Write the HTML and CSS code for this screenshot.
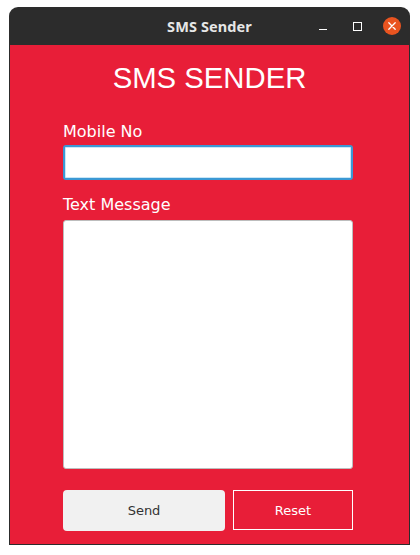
FILE: index.html
```html
<!DOCTYPE html>
<html>
<head>
<meta charset="utf-8">
<link rel="stylesheet" href="styles.css">
</head>
<body>
<div class="window">
  <div class="titlebar">
    <div></div>
    <div class="title">SMS Sender</div>
    <div class="controls">
      <svg class="ctl-min" width="8" height="8" viewBox="0 0 8 8"><line x1="0" y1="6.5" x2="8" y2="6.5" stroke="#ffffff" stroke-width="1"/></svg>
      <svg class="ctl-max" width="9" height="9" viewBox="0 0 9 9"><rect x="0.5" y="0.5" width="8" height="8" fill="none" stroke="#ffffff" stroke-width="1"/></svg>
      <svg class="ctl-close" width="18" height="18" viewBox="0 0 18 18"><circle cx="9" cy="9" r="9" fill="#e95420"/><path d="M5.8 5.8 L12.2 12.2 M12.2 5.8 L5.8 12.2" stroke="#ffffff" stroke-width="1.3" stroke-linecap="round"/></svg>
    </div>
  </div>
  <div class="content">
    <h1 class="heading">SMS SENDER</h1>
    <div class="form">
      <label class="label label-first">Mobile No</label>
      <div class="input"></div>
      <label class="label label-second">Text Message</label>
      <div class="textarea"></div>
      <div class="buttons">
        <button class="btn btn-send">Send</button>
        <button class="btn btn-reset">Reset</button>
      </div>
    </div>
  </div>
</div>
</body>
</html>
```
FILE: styles.css
```css
html, body {
  margin: 0;
  padding: 0;
  background: #ffffff;
}
body {
  padding: 7px 0 0 9px;
}
.window {
  width: 401px;
  box-sizing: border-box;
}
.titlebar {
  height: 38px;
  background: #2c2c2c;
  border-radius: 9px 9px 0 0;
  display: grid;
  grid-template-columns: 1fr auto 1fr;
  align-items: center;
}
.title {
  font-family: "Noto Sans", "DejaVu Sans", sans-serif;
  font-weight: 700;
  font-size: 14.5px;
  color: #e6e6e6;
  letter-spacing: 0.1px;
}
.controls {
  display: flex;
  justify-content: flex-end;
  align-items: center;
  padding-right: 9px;
}
.ctl-min {
  display: block;
  margin-right: 26px;
  margin-top: 1px;
}
.ctl-max {
  display: block;
  margin-right: 21px;
}
.ctl-close {
  display: block;
}
.content {
  background: #e81e38;
  border: 1px solid #2c2c2c;
  border-top: none;
  height: 500px;
  box-sizing: border-box;
  padding: 15px 0 0 53px;
}
.heading {
  margin: 0;
  width: 293px;
  text-align: center;
  font-family: "Liberation Sans", Arial, sans-serif;
  font-weight: 400;
  font-size: 29.3px;
  line-height: 36px;
  color: #ffffff;
}
.form {
  width: 290px;
  display: flex;
  flex-direction: column;
}
.label {
  display: block;
  font-family: "DejaVu Sans", sans-serif;
  font-size: 16px;
  line-height: 19px;
  color: #ffffff;
}
.label-first {
  margin-top: 26px;
}
.label-second {
  margin-top: 15px;
}
.input {
  margin-top: 4px;
  height: 35px;
  box-sizing: border-box;
  background: #ffffff;
  border: 2px solid #3b98d4;
  border-radius: 3px;
  box-shadow: inset 0 0 0 1px #c9e6f7;
}
.textarea {
  margin-top: 6px;
  height: 249px;
  box-sizing: border-box;
  background: #ffffff;
  border: 1px solid #bdbdbd;
  border-radius: 3px;
}
.buttons {
  margin-top: 21px;
  display: flex;
  gap: 8px;
  align-items: flex-start;
}
.btn {
  font-family: "DejaVu Sans", sans-serif;
  font-size: 13px;
  margin: 0;
  padding: 0;
  cursor: pointer;
}
.btn-send {
  width: 162px;
  height: 41px;
  background: #f1f1f1;
  border: none;
  border-radius: 4px;
  color: #333333;
}
.btn-reset {
  width: 120px;
  height: 40px;
  background: #e81e38;
  border: 1px solid #ffffff;
  border-radius: 0;
  color: #ffffff;
}
```
